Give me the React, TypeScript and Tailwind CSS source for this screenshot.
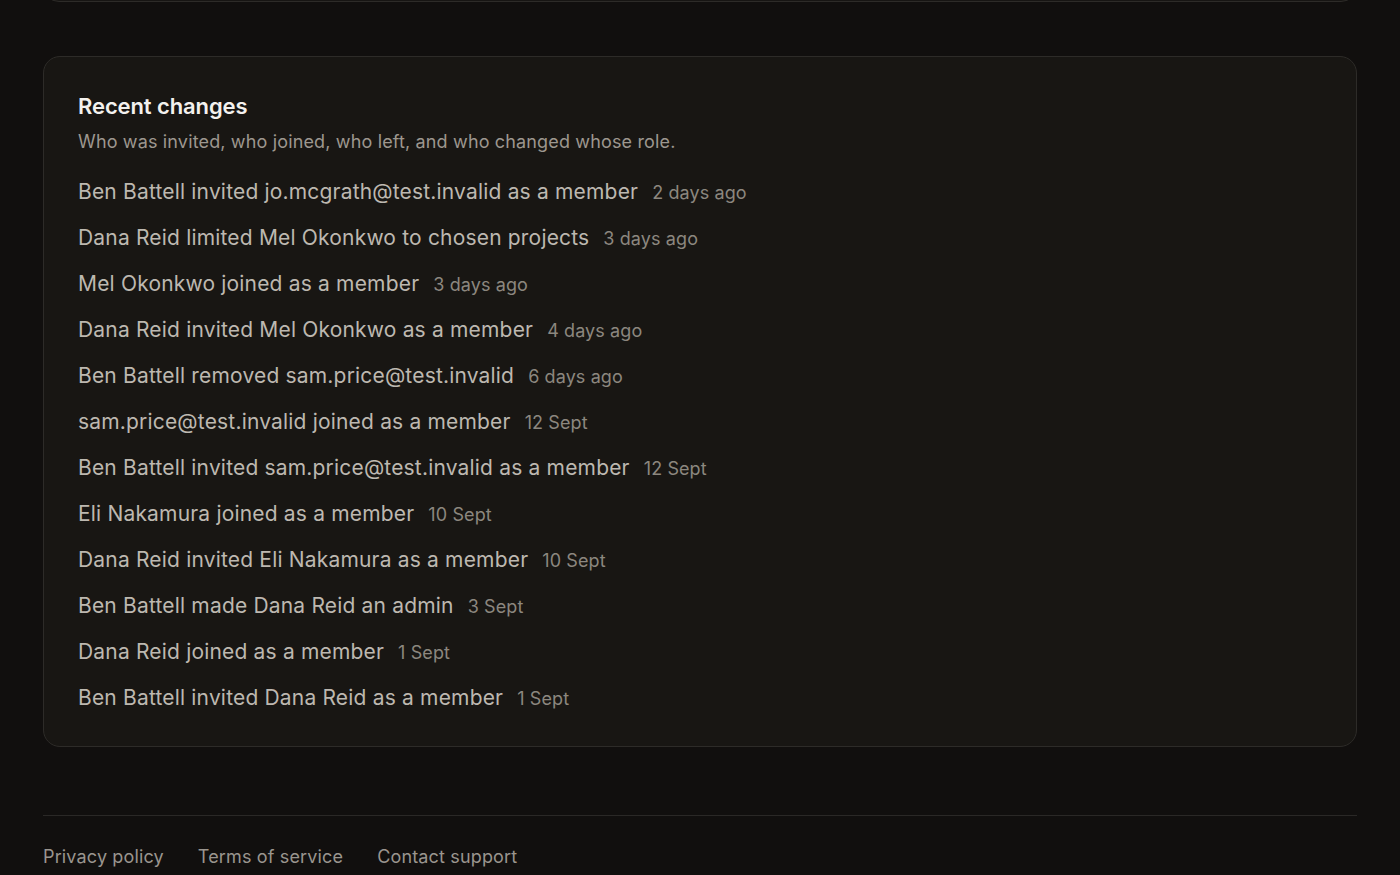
import React from "react";

const rows: [string, string][] = [
  ["Ben Battell invited jo.mcgrath@test.invalid as a member", "2 days ago"],
  ["Dana Reid limited Mel Okonkwo to chosen projects", "3 days ago"],
  ["Mel Okonkwo joined as a member", "3 days ago"],
  ["Dana Reid invited Mel Okonkwo as a member", "4 days ago"],
  ["Ben Battell removed sam.price@test.invalid", "6 days ago"],
  ["sam.price@test.invalid joined as a member", "12 Sept"],
  ["Ben Battell invited sam.price@test.invalid as a member", "12 Sept"],
  ["Eli Nakamura joined as a member", "10 Sept"],
  ["Dana Reid invited Eli Nakamura as a member", "10 Sept"],
  ["Ben Battell made Dana Reid an admin", "3 Sept"],
  ["Dana Reid joined as a member", "1 Sept"],
  ["Ben Battell invited Dana Reid as a member", "1 Sept"],
];

export default function App() {
  return (
    <div
      className="min-h-screen w-full overflow-hidden bg-[#110f0e] px-[43px] flex flex-col"
      style={{ fontFamily: "Inter, 'Noto Sans', sans-serif" }}
    >
      <div className="mt-[-60px] h-[62px] rounded-2xl border border-[#2d2b28] bg-[#171513] shrink-0" />
      <section className="mt-[54px] rounded-[17px] border border-[#2d2b28] bg-[#181613] px-[34px] pt-[35px] pb-[33px]">
        <h2 className="text-[22px] leading-[28px] font-semibold text-[#f3f1ee] tracking-[-0.1px]">Recent changes</h2>
        <p className="mt-[10px] text-[18px] leading-[24px] text-[#9d978f] tracking-[0.15px]">
          Who was invited, who joined, who left, and who changed whose role.
        </p>
        <ul className="mt-[23px] flex flex-col gap-[16px]">
          {rows.map(([t, d], i) => (
            <li key={i} className="flex items-baseline gap-[14px] h-[30px] leading-[30px]">
              <span className="text-[21px] text-[#bdb8b0] tracking-[0.18px]">{t}</span>
              <span className="text-[18px] text-[#8c877f] tracking-[0.1px]">{d}</span>
            </li>
          ))}
        </ul>
      </section>
      <footer className="mt-[68px] border-t border-[#2a2826] pt-[29px] flex gap-[34px] text-[18px] leading-[24px] text-[#9a958e] tracking-[0.15px]">
        <a>Privacy policy</a>
        <a>Terms of service</a>
        <a>Contact support</a>
      </footer>
    </div>
  );
}
